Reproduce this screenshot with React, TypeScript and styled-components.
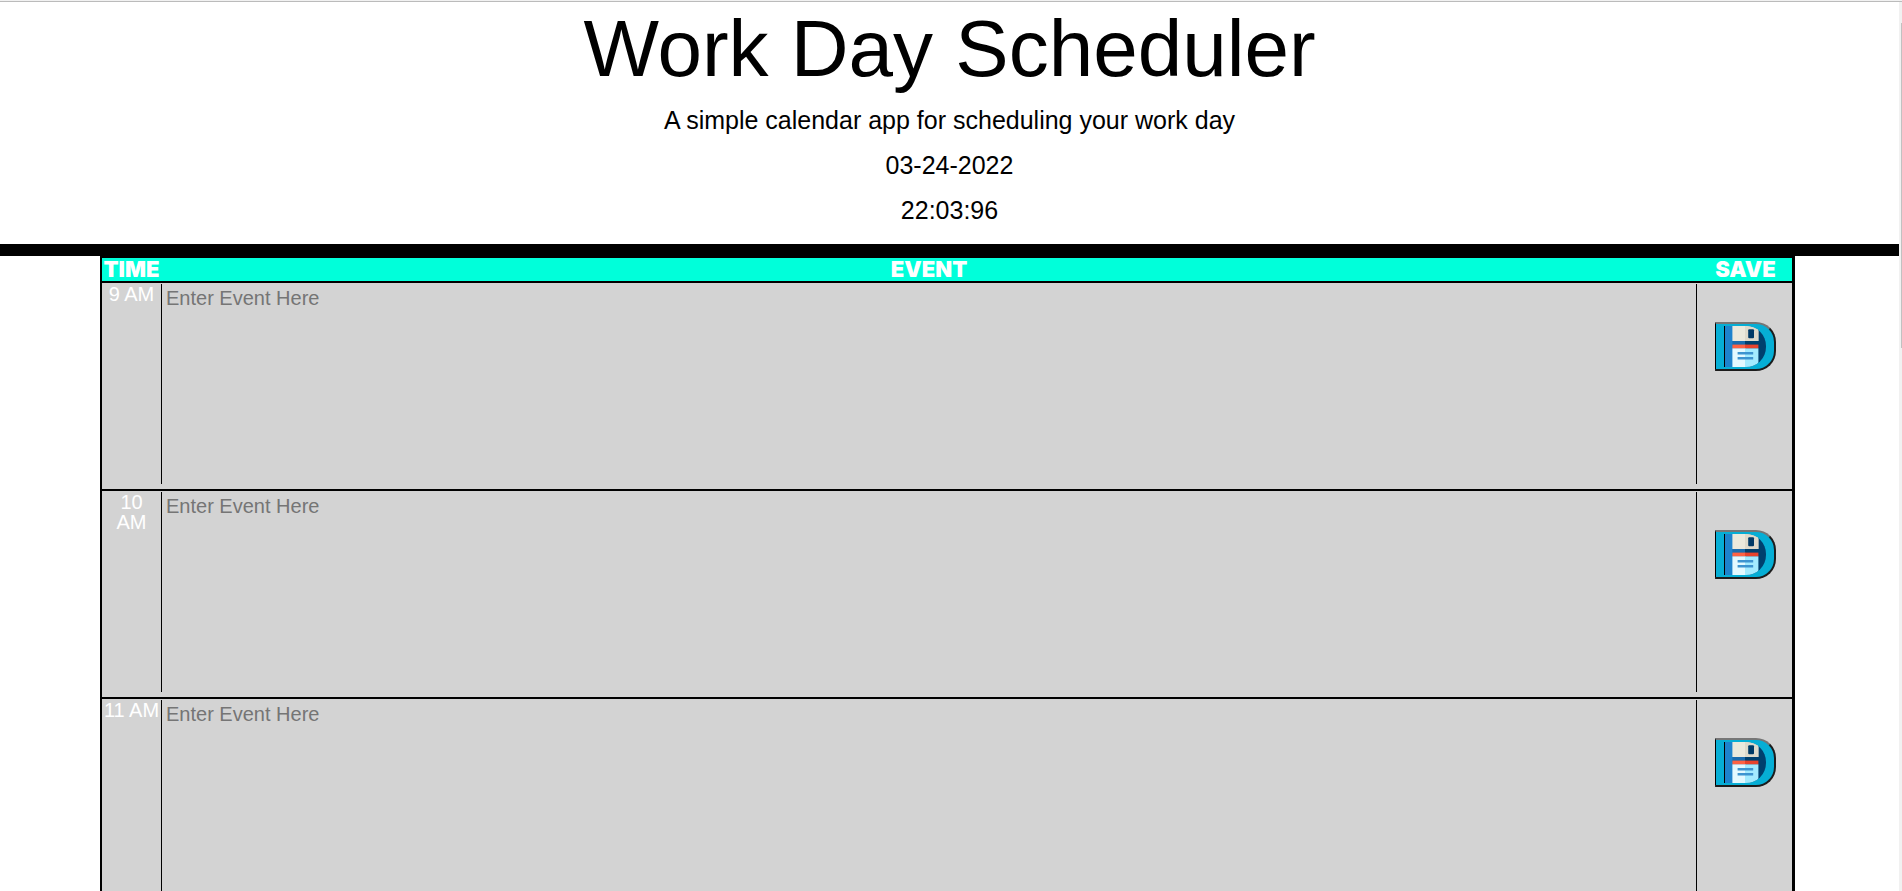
import React from "react";
import styled, { createGlobalStyle } from "styled-components";

const GlobalStyle = createGlobalStyle`
  * { box-sizing: border-box; }
  body {
    margin: 0;
    background: #fff;
    color: #000;
    font-family: Arial, "Liberation Sans", sans-serif;
  }
`;

const Window = styled.div`
  display: flex;
  flex-direction: column;
  height: 100vh;
  overflow: hidden;
`;

const TopEdge = styled.div`
  flex: none;
  height: 2px;
  background: #f1f1f1;
  border-bottom: 1px solid #bbb;
`;

const Viewport = styled.div`
  display: flex;
  flex: 1;
  min-height: 0;
`;

const Page = styled.div`
  flex: 1;
  min-width: 0;
  overflow-y: auto;
  scrollbar-width: none;
`;

const ScrollTrack = styled.div`
  flex: none;
  width: 3px;
  padding: 21px 0 0 2px;
  background: #f1f1f1;
`;

const ScrollThumb = styled.div`
  height: 325px;
  background: #c1c1c1;
`;

const Header = styled.header`
  display: flex;
  flex-direction: column;
  align-items: center;
  padding: 0 0 11px;
  border-bottom: 12px solid #000;
  text-align: center;
`;

const Title = styled.h1`
  margin: 0 0 2px;
  font-size: 80px;
  font-weight: 400;
  line-height: 94px;
`;

const Lead = styled.p`
  margin: 0;
  font-size: 25px;
  line-height: 45px;
`;

const Planner = styled.main`
  padding: 0 104px 0 100px;
`;

const Table = styled.table`
  width: 100%;
  table-layout: fixed;
  border-spacing: 0;
  border: solid #000;
  border-width: 2px 3px 0 2px;
  background: #d3d3d3;
`;

const HeadCell = styled.th<{ $width?: number }>`
  width: ${(p) => (p.$width ? `${p.$width}px` : "auto")};
  height: 25px;
  padding: 0;
  border-bottom: 2px solid #000;
  background: #00ffda;
  color: #fff;
  font-family: "Arial Black", Inter, sans-serif;
  font-size: 22px;
  font-weight: 900;
  line-height: 23px;

  &:last-child { padding-left: 2px; }
`;

const TimeCell = styled.th`
  height: 208px;
  padding: 1px;
  border-bottom: 2px solid #000;
  color: #fff;
  font-size: 20px;
  font-weight: 400;
  line-height: 20px;
  vertical-align: top;
  white-space: pre-line;
`;

const Cell = styled.td`
  padding: 1px 0 0;
  border-bottom: 2px solid #000;
  vertical-align: top;
`;

const SaveCell = styled(Cell)`
  padding: 39px 0 0 2px;
  text-align: center;
`;

const EventField = styled.textarea`
  display: block;
  width: 100%;
  height: 200px;
  padding: 3px 4px;
  border: solid #000;
  border-width: 0 1px;
  border-radius: 0;
  background: transparent;
  color: #000;
  font: 20px/23px Arial, "Liberation Sans", sans-serif;
  resize: none;
  outline: none;

  &::placeholder { color: #757575; }
`;

const SaveButton = styled.button`
  display: inline-flex;
  align-items: center;
  justify-content: center;
  width: 61px;
  height: 49px;
  padding: 0;
  border: solid;
  border-width: 2px 2px 2px 1px;
  border-color: #767676 #1c1c1c #1c1c1c #000;
  border-radius: 0 20px 20px 0;
  background: #06aed5;
  vertical-align: top;
  cursor: pointer;
`;

const Disk = styled.svg`
  display: block;
  width: 42px;
  height: 41px;
  border-left: 1px solid #000;
  border-radius: 0 20px 20px 0;
`;

function FloppyIcon() {
  return (
    <Disk viewBox="0 0 41 41" preserveAspectRatio="none" aria-hidden="true">
      <rect width="21" height="41" fill="#1e83cd" />
      <rect x="20" width="21" height="41" fill="#00406e" />
      <rect x="7.4" y="15" width="12.6" height="5" fill="#1a6cae" />
      <rect x="7.4" width="26" height="15" fill="#ebe9dc" />
      <rect x="20" width="13.4" height="15" fill="#dedacb" />
      <rect x="23.2" y="3.2" width="5.8" height="9" rx="1" fill="#003a66" />
      <rect x="7.4" y="18.6" width="13" height="4" fill="#ff6243" />
      <rect x="20" y="18.6" width="13.4" height="4" fill="#e8432c" />
      <rect x="7.4" y="22.4" width="13" height="19" fill="#e3f9ff" />
      <rect x="20" y="22.4" width="13.4" height="19" fill="#a3ebff" />
      <path d="M12.6 27.2h15.6M12.6 32.2h15.6" stroke="#3d94d0" strokeWidth="2.4" />
    </Disk>
  );
}

const HOURS = ["9 AM", "10\nAM", "11 AM"];

export default function App() {
  return (
    <Window>
      <GlobalStyle />
      <TopEdge />
      <Viewport>
        <Page>
          <Header>
            <Title>Work Day Scheduler</Title>
            <Lead>A simple calendar app for scheduling your work day</Lead>
            <Lead>03-24-2022</Lead>
            <Lead>22:03:96</Lead>
          </Header>
          <Planner>
            <Table>
              <thead>
                <tr>
                  <HeadCell scope="col" $width={59}>TIME</HeadCell>
                  <HeadCell scope="col">EVENT</HeadCell>
                  <HeadCell scope="col" $width={95}>SAVE</HeadCell>
                </tr>
              </thead>
              <tbody>
                {HOURS.map((hour) => (
                  <tr key={hour}>
                    <TimeCell scope="row">{hour}</TimeCell>
                    <Cell>
                      <EventField aria-label={`Event at ${hour}`} placeholder="Enter Event Here" />
                    </Cell>
                    <SaveCell>
                      <SaveButton type="button" aria-label={`Save ${hour}`}>
                        <FloppyIcon />
                      </SaveButton>
                    </SaveCell>
                  </tr>
                ))}
              </tbody>
            </Table>
          </Planner>
        </Page>
        <ScrollTrack>
          <ScrollThumb />
        </ScrollTrack>
      </Viewport>
    </Window>
  );
}
